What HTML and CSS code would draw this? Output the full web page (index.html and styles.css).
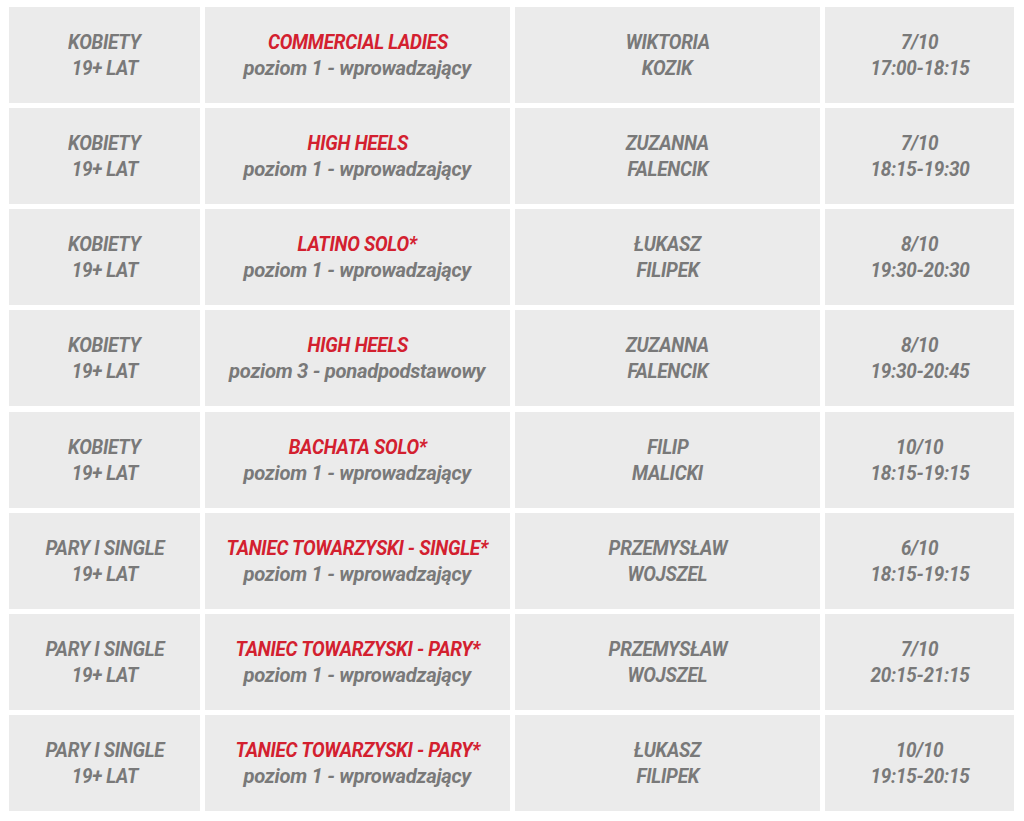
FILE: index.html
```html
<!DOCTYPE html>
<html lang="pl">
<head>
<meta charset="utf-8">
<title>Grafik zajęć</title>
<link rel="stylesheet" href="styles.css">
</head>
<body>
<div class="schedule">
  <div class="cell"><span class="line">KOBIETY</span><span class="line">19+ LAT</span></div>
  <div class="cell"><span class="line red">COMMERCIAL LADIES</span><span class="line sub">poziom 1 - wprowadzający</span></div>
  <div class="cell"><span class="line">WIKTORIA</span><span class="line">KOZIK</span></div>
  <div class="cell"><span class="line">7/10</span><span class="line">17:00-18:15</span></div>

  <div class="cell"><span class="line">KOBIETY</span><span class="line">19+ LAT</span></div>
  <div class="cell"><span class="line red">HIGH HEELS</span><span class="line sub">poziom 1 - wprowadzający</span></div>
  <div class="cell"><span class="line">ZUZANNA</span><span class="line">FALENCIK</span></div>
  <div class="cell"><span class="line">7/10</span><span class="line">18:15-19:30</span></div>

  <div class="cell"><span class="line">KOBIETY</span><span class="line">19+ LAT</span></div>
  <div class="cell"><span class="line red">LATINO SOLO*</span><span class="line sub">poziom 1 - wprowadzający</span></div>
  <div class="cell"><span class="line">ŁUKASZ</span><span class="line">FILIPEK</span></div>
  <div class="cell"><span class="line">8/10</span><span class="line">19:30-20:30</span></div>

  <div class="cell"><span class="line">KOBIETY</span><span class="line">19+ LAT</span></div>
  <div class="cell"><span class="line red">HIGH HEELS</span><span class="line sub">poziom 3 - ponadpodstawowy</span></div>
  <div class="cell"><span class="line">ZUZANNA</span><span class="line">FALENCIK</span></div>
  <div class="cell"><span class="line">8/10</span><span class="line">19:30-20:45</span></div>

  <div class="cell"><span class="line">KOBIETY</span><span class="line">19+ LAT</span></div>
  <div class="cell"><span class="line red">BACHATA SOLO*</span><span class="line sub">poziom 1 - wprowadzający</span></div>
  <div class="cell"><span class="line">FILIP</span><span class="line">MALICKI</span></div>
  <div class="cell"><span class="line">10/10</span><span class="line">18:15-19:15</span></div>

  <div class="cell"><span class="line">PARY I SINGLE</span><span class="line">19+ LAT</span></div>
  <div class="cell"><span class="line red">TANIEC TOWARZYSKI - SINGLE*</span><span class="line sub">poziom 1 - wprowadzający</span></div>
  <div class="cell"><span class="line">PRZEMYSŁAW</span><span class="line">WOJSZEL</span></div>
  <div class="cell"><span class="line">6/10</span><span class="line">18:15-19:15</span></div>

  <div class="cell"><span class="line">PARY I SINGLE</span><span class="line">19+ LAT</span></div>
  <div class="cell"><span class="line red">TANIEC TOWARZYSKI - PARY*</span><span class="line sub">poziom 1 - wprowadzający</span></div>
  <div class="cell"><span class="line">PRZEMYSŁAW</span><span class="line">WOJSZEL</span></div>
  <div class="cell"><span class="line">7/10</span><span class="line">20:15-21:15</span></div>

  <div class="cell"><span class="line">PARY I SINGLE</span><span class="line">19+ LAT</span></div>
  <div class="cell"><span class="line red">TANIEC TOWARZYSKI - PARY*</span><span class="line sub">poziom 1 - wprowadzający</span></div>
  <div class="cell"><span class="line">ŁUKASZ</span><span class="line">FILIPEK</span></div>
  <div class="cell"><span class="line">10/10</span><span class="line">19:15-20:15</span></div>
</div>
</body>
</html>
```

FILE: styles.css
```css
html, body {
  margin: 0;
  padding: 0;
  background: #ffffff;
}

.schedule {
  display: grid;
  grid-template-columns: 191px 305px 305px 189px;
  grid-auto-rows: 96px;
  column-gap: 5px;
  row-gap: 5.14px;
  padding: 7px 0 0 9px;
}

.cell {
  background: #ebebeb;
  display: flex;
  flex-direction: column;
  align-items: center;
  justify-content: center;
  font-family: "Liberation Sans Narrow", Roboto, "Liberation Sans", sans-serif;
  font-weight: 700;
  font-style: italic;
  font-size: 21px;
  line-height: 26px;
  color: #797979;
  text-align: center;
  letter-spacing: -0.3px;
}

.line {
  display: inline-block;
  white-space: nowrap;
  transform: scaleX(0.9);
}

.line.sub {
  transform: scaleX(0.962);
}

.red {
  color: #d3202f;
}
```
